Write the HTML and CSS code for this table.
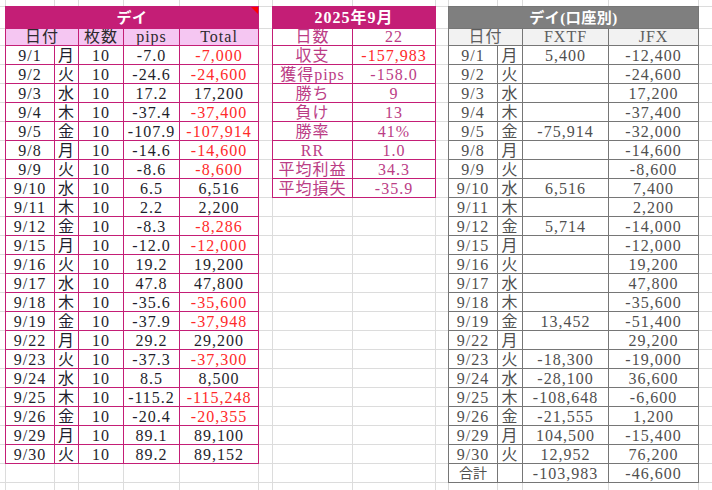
FILE: index.html
```html
<!DOCTYPE html>
<html lang="ja">
<head>
<meta charset="utf-8">
<title>デイ 2025年9月</title>
<link rel="stylesheet" href="styles.css">
</head>
<body>
<div class="sheet">
  <table class="grid pink t-day">
    <colgroup><col class="c48"><col class="c23"><col class="c44"><col class="c55"><col class="c78"></colgroup>
    <tr class="r-title"><td colspan="5" class="title pink-title flag">デイ</td></tr>
    <tr class="r-head"><td colspan="2" class="head pink-head">日付</td><td class="head pink-head">枚数</td><td class="head pink-head">pips</td><td class="head pink-head">Total</td></tr>
    <tr><td>9/1</td><td>月</td><td>10</td><td>-7.0</td><td class="neg">-7,000</td></tr>
    <tr><td>9/2</td><td>火</td><td>10</td><td>-24.6</td><td class="neg">-24,600</td></tr>
    <tr><td>9/3</td><td>水</td><td>10</td><td>17.2</td><td>17,200</td></tr>
    <tr><td>9/4</td><td>木</td><td>10</td><td>-37.4</td><td class="neg">-37,400</td></tr>
    <tr><td>9/5</td><td>金</td><td>10</td><td>-107.9</td><td class="neg">-107,914</td></tr>
    <tr><td>9/8</td><td>月</td><td>10</td><td>-14.6</td><td class="neg">-14,600</td></tr>
    <tr><td>9/9</td><td>火</td><td>10</td><td>-8.6</td><td class="neg">-8,600</td></tr>
    <tr><td>9/10</td><td>水</td><td>10</td><td>6.5</td><td>6,516</td></tr>
    <tr><td>9/11</td><td>木</td><td>10</td><td>2.2</td><td>2,200</td></tr>
    <tr><td>9/12</td><td>金</td><td>10</td><td>-8.3</td><td class="neg">-8,286</td></tr>
    <tr><td>9/15</td><td>月</td><td>10</td><td>-12.0</td><td class="neg">-12,000</td></tr>
    <tr><td>9/16</td><td>火</td><td>10</td><td>19.2</td><td>19,200</td></tr>
    <tr><td>9/17</td><td>水</td><td>10</td><td>47.8</td><td>47,800</td></tr>
    <tr><td>9/18</td><td>木</td><td>10</td><td>-35.6</td><td class="neg">-35,600</td></tr>
    <tr><td>9/19</td><td>金</td><td>10</td><td>-37.9</td><td class="neg">-37,948</td></tr>
    <tr><td>9/22</td><td>月</td><td>10</td><td>29.2</td><td>29,200</td></tr>
    <tr><td>9/23</td><td>火</td><td>10</td><td>-37.3</td><td class="neg">-37,300</td></tr>
    <tr><td>9/24</td><td>水</td><td>10</td><td>8.5</td><td>8,500</td></tr>
    <tr><td>9/25</td><td>木</td><td>10</td><td>-115.2</td><td class="neg">-115,248</td></tr>
    <tr><td>9/26</td><td>金</td><td>10</td><td>-20.4</td><td class="neg">-20,355</td></tr>
    <tr><td>9/29</td><td>月</td><td>10</td><td>89.1</td><td>89,100</td></tr>
    <tr><td>9/30</td><td>火</td><td>10</td><td>89.2</td><td>89,152</td></tr>
  </table>

  <table class="grid pink t-month">
    <colgroup><col class="c79"><col class="c82"></colgroup>
    <tr class="r-title"><td colspan="2" class="title pink-title month">2025年9月</td></tr>
    <tr class="r-head"><td class="m-head">日数</td><td class="m-head">22</td></tr>
    <tr><td>収支</td><td class="neg">-157,983</td></tr>
    <tr><td>獲得pips</td><td>-158.0</td></tr>
    <tr><td>勝ち</td><td>9</td></tr>
    <tr><td>負け</td><td>13</td></tr>
    <tr><td>勝率</td><td>41%</td></tr>
    <tr><td>RR</td><td>1.0</td></tr>
    <tr><td>平均利益</td><td>34.3</td></tr>
    <tr><td>平均損失</td><td>-35.9</td></tr>
  </table>

  <table class="grid gray t-acct">
    <colgroup><col class="c48"><col class="c24"><col class="c85"><col class="c89"></colgroup>
    <tr class="r-title"><td colspan="4" class="title gray-title">デイ(口座別)</td></tr>
    <tr class="r-head"><td colspan="2" class="head gray-head">日付</td><td class="head gray-head">FXTF</td><td class="head gray-head">JFX</td></tr>
    <tr><td>9/1</td><td>月</td><td>5,400</td><td>-12,400</td></tr>
    <tr><td>9/2</td><td>火</td><td></td><td>-24,600</td></tr>
    <tr><td>9/3</td><td>水</td><td></td><td>17,200</td></tr>
    <tr><td>9/4</td><td>木</td><td></td><td>-37,400</td></tr>
    <tr><td>9/5</td><td>金</td><td>-75,914</td><td>-32,000</td></tr>
    <tr><td>9/8</td><td>月</td><td></td><td>-14,600</td></tr>
    <tr><td>9/9</td><td>火</td><td></td><td>-8,600</td></tr>
    <tr><td>9/10</td><td>水</td><td>6,516</td><td>7,400</td></tr>
    <tr><td>9/11</td><td>木</td><td></td><td>2,200</td></tr>
    <tr><td>9/12</td><td>金</td><td>5,714</td><td>-14,000</td></tr>
    <tr><td>9/15</td><td>月</td><td></td><td>-12,000</td></tr>
    <tr><td>9/16</td><td>火</td><td></td><td>19,200</td></tr>
    <tr><td>9/17</td><td>水</td><td></td><td>47,800</td></tr>
    <tr><td>9/18</td><td>木</td><td></td><td>-35,600</td></tr>
    <tr><td>9/19</td><td>金</td><td>13,452</td><td>-51,400</td></tr>
    <tr><td>9/22</td><td>月</td><td></td><td>29,200</td></tr>
    <tr><td>9/23</td><td>火</td><td>-18,300</td><td>-19,000</td></tr>
    <tr><td>9/24</td><td>水</td><td>-28,100</td><td>36,600</td></tr>
    <tr><td>9/25</td><td>木</td><td>-108,648</td><td>-6,600</td></tr>
    <tr><td>9/26</td><td>金</td><td>-21,555</td><td>1,200</td></tr>
    <tr><td>9/29</td><td>月</td><td>104,500</td><td>-15,400</td></tr>
    <tr><td>9/30</td><td>火</td><td>12,952</td><td>76,200</td></tr>
    <tr><td class="sum">合計</td><td></td><td>-103,983</td><td>-46,600</td></tr>
  </table>
</div>
</body>
</html>
```

FILE: styles.css
```css
html, body {
  margin: 0;
  padding: 0;
}

body {
  width: 712px;
  height: 490px;
  overflow: hidden;
  background: #ffffff;
  font-family: "Liberation Serif", "Noto Sans CJK JP", serif;
  font-size: 16px;
}

/* spreadsheet canvas with light gridlines */
.sheet {
  display: grid;
  grid-template-columns: 5px 254px 13px 164px 12px 251px 1fr;
  grid-template-rows: 6px auto;
  align-items: start;
  height: 490px;
  background-color: #ffffff;
  background-image:
    linear-gradient(#dcdcdc, #dcdcdc),
    linear-gradient(#dcdcdc, #dcdcdc),
    linear-gradient(#dcdcdc, #dcdcdc),
    linear-gradient(#dcdcdc, #dcdcdc),
    linear-gradient(#dcdcdc, #dcdcdc),
    linear-gradient(#dcdcdc, #dcdcdc),
    linear-gradient(#dcdcdc, #dcdcdc),
    linear-gradient(#dcdcdc, #dcdcdc),
    linear-gradient(#dcdcdc, #dcdcdc),
    linear-gradient(#dcdcdc, #dcdcdc),
    linear-gradient(#dcdcdc, #dcdcdc),
    linear-gradient(#dcdcdc, #dcdcdc),
    linear-gradient(#dcdcdc, #dcdcdc),
    linear-gradient(#dcdcdc, #dcdcdc),
    linear-gradient(#dcdcdc, #dcdcdc),
    linear-gradient(#dcdcdc, #dcdcdc),
    repeating-linear-gradient(to bottom, #dcdcdc 0 1px, transparent 1px 19px);
  background-size:
    1px 100%, 1px 100%, 1px 100%, 1px 100%, 1px 100%, 1px 100%, 1px 100%,
    1px 100%, 1px 100%, 1px 100%, 1px 100%, 1px 100%, 1px 100%, 1px 100%,
    100% 1px, 100% 1px,
    100% 460px;
  background-position:
    5px 0, 54px 0, 78px 0, 123px 0, 179px 0, 258px 0, 272px 0,
    352px 0, 435px 0, 448px 0, 497px 0, 522px 0, 608px 0, 698px 0,
    0 6px, 0 28px,
    0 45px;
  background-repeat: no-repeat;
}

.t-day { grid-column: 2; grid-row: 2; width: 254px; }
.t-month { grid-column: 4; grid-row: 2; width: 164px; }
.t-acct { grid-column: 6; grid-row: 2; width: 251px; }

/* tables: 1px lines come from the table background showing through the spacing */
.grid {
  border-collapse: separate;
  border-spacing: 1px;
  table-layout: fixed;
}
.pink { background: #c41e76; }
.gray { background: #767676; }

.c23 { width: 23px; }
.c24 { width: 24px; }
.c44 { width: 44px; }
.c48 { width: 48px; }
.c55 { width: 55px; }
.c78 { width: 78px; }
.c79 { width: 79px; }
.c82 { width: 82px; }
.c85 { width: 85px; }
.c89 { width: 89px; }

.grid tr { height: 18px; }
.grid tr.r-title { height: 21px; }
.grid tr.r-head { height: 16px; }

.grid td {
  padding: 2px 0 0;
  line-height: 16px;
  text-align: center;
  vertical-align: top;
  background: #ffffff;
  white-space: nowrap;
  overflow: hidden;
  letter-spacing: 1px;
}

.t-day td { color: #1e1e2c; }
.t-month td { color: #bb3d86; }
.t-acct td { color: #4f4f4f; }

.grid td.neg { color: #ff2a2a; }

.grid td.title {
  padding-top: 3px;
  color: #ffffff;
  font-weight: bold;
  font-size: 15px;
  letter-spacing: 0.5px;
}
.grid td.month {
  font-size: 16px;
  letter-spacing: 1px;
}
.grid td.pink-title { background: #c41e76; }
.grid td.gray-title { background: #7f7f7f; }

.flag { position: relative; }
.flag::after {
  content: "";
  position: absolute;
  top: 0;
  right: 0;
  width: 0;
  height: 0;
  border-top: 7px solid #ff0000;
  border-left: 7px solid transparent;
}

.grid td.head,
.grid td.m-head {
  padding-top: 0;
}
.grid td.pink-head {
  background: #f5c6f2;
  color: #2e2a2e;
}
.grid td.gray-head {
  background: #f2f2f2;
  color: #5e5e5e;
}

.grid td.sum {
  font-size: 14px;
  letter-spacing: 0;
}
```
